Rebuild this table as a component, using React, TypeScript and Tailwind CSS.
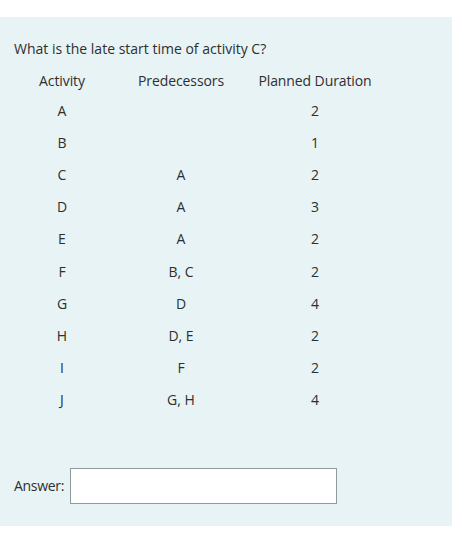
import React from "react";

const rows: [string, string, string][] = [
  ["A", "", "2"],
  ["B", "", "1"],
  ["C", "A", "2"],
  ["D", "A", "3"],
  ["E", "A", "2"],
  ["F", "B, C", "2"],
  ["G", "D", "4"],
  ["H", "D, E", "2"],
  ["I", "F", "2"],
  ["J", "G, H", "4"],
];

function Cell({ w, children }: { w: string; children: React.ReactNode }) {
  return <div className={`flex justify-center items-center ${w}`}>{children}</div>;
}

export default function App() {
  return (
    <div
      className="w-[452px] h-[544px] bg-white text-[#2f2f2f] text-[14px]"
      style={{ fontFamily: '"Open Sans", "Noto Sans", sans-serif' }}
    >
      <div className="h-[17px]" />
      <div className="bg-[#e7f3f5] h-[509px] pl-[14px] flex flex-col">
        <div className="h-[21px]" />
        <div className="h-[22px] leading-[22px]">What is the late start time of activity C?</div>
        <div className="h-[6px]" />
        <div className="flex h-[28px] items-center tracking-[-0.1px]">
          <Cell w="w-[96px]">Activity</Cell>
          <Cell w="w-[142px]">Predecessors</Cell>
          <Cell w="w-[126px]">Planned Duration</Cell>
        </div>
        {rows.map((r, i) => (
          <div key={i} className="flex h-[32.2px] items-center">
            <Cell w="w-[96px]">{r[0]}</Cell>
            <Cell w="w-[142px]">{r[1]}</Cell>
            <Cell w="w-[126px]">{r[2]}</Cell>
          </div>
        ))}
        <div className="h-[52px]" />
        <div className="flex items-center gap-[6px]">
          <span className="tracking-[-0.3px]">Answer:</span>
          <input
            type="text"
            className="w-[267px] h-[36px] bg-white border border-[#8f9a9f] outline-none"
          />
        </div>
      </div>
    </div>
  );
}
